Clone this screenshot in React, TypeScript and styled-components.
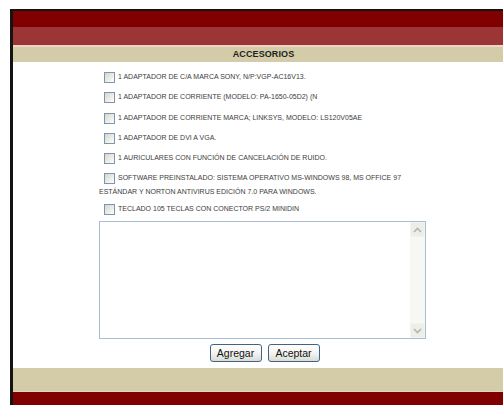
import React from "react";
import styled, { createGlobalStyle } from "styled-components";

const GlobalStyle = createGlobalStyle`
  html, body {
    margin: 0;
    padding: 0;
    background: #ffffff;
    overflow: hidden;
  }
`;

const Page = styled.div`
  width: 503px;
  height: 405px;
  overflow: hidden;
  padding: 9px 0 0 10px;
  box-sizing: border-box;
`;

const Frame = styled.div`
  width: 501px;
  border-top: 2px solid #141414;
  border-left: 3px solid #141414;
  display: flex;
  flex-direction: column;
`;

const TopBar = styled.div`
  height: 16px;
  background: #800000;
`;

const SubBar = styled.div`
  height: 18px;
  background: #9c3535;
  border-bottom: 2px solid #ecd6c8;
`;

const SectionTitle = styled.div`
  height: 15px;
  line-height: 15px;
  background: #d4cca8;
  text-align: center;
  font-family: "Liberation Sans", Arial, sans-serif;
  font-weight: bold;
  font-size: 9px;
  color: #222;
  letter-spacing: 0.1px;
`;

const Content = styled.div`
  background: #ffffff;
  height: 306px;
  box-sizing: border-box;
  padding-top: 7px;
`;

const Column = styled.div`
  width: 327px;
  margin: 0 auto;
  position: relative;
  left: -1px;
`;

const Row = styled.label`
  display: block;
  font-family: "Liberation Sans", Arial, sans-serif;
  font-size: 7px;
  line-height: 10px;
  color: #3c3c3c;
  margin-bottom: 3.3px;
`;

const Check = styled.input.attrs({ type: "checkbox" })`
  appearance: none;
  -webkit-appearance: none;
  display: inline-block;
  width: 11px;
  height: 11px;
  margin: 3px 3px 3px 5px;
  vertical-align: middle;
  box-sizing: border-box;
  border: 1px solid #7d95ad;
  background: linear-gradient(135deg, #d6d6d0 0%, #f2f2ee 70%, #ffffff 100%);
`;

const TextBox = styled.div`
  display: flex;
  height: 118px;
  border: 1px solid #a9bdd6;
  box-sizing: border-box;
`;

const Field = styled.textarea`
  flex: 1;
  border: none;
  outline: none;
  resize: none;
  padding: 2px;
  font-family: "Liberation Sans", Arial, sans-serif;
  font-size: 11px;
  background: #ffffff;
`;

const ScrollTrack = styled.div`
  width: 15px;
  background: #f7f7f3;
  display: flex;
  flex-direction: column;
  justify-content: space-between;
`;

const ScrollArrow = styled.div`
  height: 15px;
  display: flex;
  align-items: center;
  justify-content: center;
  background: #eeeee8;
  border: 1px solid #f2f2ee;
  box-sizing: border-box;
`;

const Buttons = styled.div`
  display: flex;
  justify-content: center;
  gap: 6px;
  margin-top: 5px;
  padding-left: 2px;
`;

const Button = styled.button`
  width: 52px;
  height: 18px;
  padding: 0;
  border: 1px solid #3f6489;
  border-radius: 3px;
  background: linear-gradient(#ffffff 0%, #f4f4f0 50%, #dcdcd6 100%);
  font-family: "Liberation Sans", Arial, sans-serif;
  font-size: 10.5px;
  color: #111;
`;

const Footer = styled.div`
  height: 23px;
  background: #d4cca8;
  border-bottom: 1px solid #e6d2c4;
`;

const BottomBar = styled.div`
  height: 30px;
  background: #800000;
`;

const Chevron = ({ up }: { up?: boolean }) => (
  <svg width="9" height="6" viewBox="0 0 9 6">
    <path
      d={up ? "M1 5 L4.5 1.5 L8 5" : "M1 1 L4.5 4.5 L8 1"}
      fill="none"
      stroke="#b4b4ae"
      strokeWidth="1.6"
    />
  </svg>
);

const items = [
  "1 ADAPTADOR DE C/A MARCA SONY, N/P:VGP-AC16V13.",
  "1 ADAPTADOR DE CORRIENTE (MODELO: PA-1650-05D2) (N",
  "1 ADAPTADOR DE CORRIENTE MARCA; LINKSYS, MODELO: LS120V05AE",
  "1 ADAPTADOR DE DVI A VGA.",
  "1 AURICULARES CON FUNCIÓN DE CANCELACIÓN DE RUIDO.",
  "SOFTWARE PREINSTALADO: SISTEMA OPERATIVO MS-WINDOWS 98, MS OFFICE 97 ESTÁNDAR Y NORTON ANTIVIRUS EDICIÓN 7.0 PARA WINDOWS.",
  "TECLADO 105 TECLAS CON CONECTOR PS/2 MINIDIN",
];

export default function App() {
  return (
    <Page>
      <GlobalStyle />
      <Frame>
        <TopBar />
        <SubBar />
        <SectionTitle>ACCESORIOS</SectionTitle>
        <Content>
          <Column>
            {items.map((text) => (
              <Row key={text}>
                <Check />
                {text}
              </Row>
            ))}
            <TextBox>
              <Field />
              <ScrollTrack>
                <ScrollArrow>
                  <Chevron up />
                </ScrollArrow>
                <ScrollArrow>
                  <Chevron />
                </ScrollArrow>
              </ScrollTrack>
            </TextBox>
          </Column>
          <Buttons>
            <Button>Agregar</Button>
            <Button>Aceptar</Button>
          </Buttons>
        </Content>
        <Footer />
        <BottomBar />
      </Frame>
    </Page>
  );
}
